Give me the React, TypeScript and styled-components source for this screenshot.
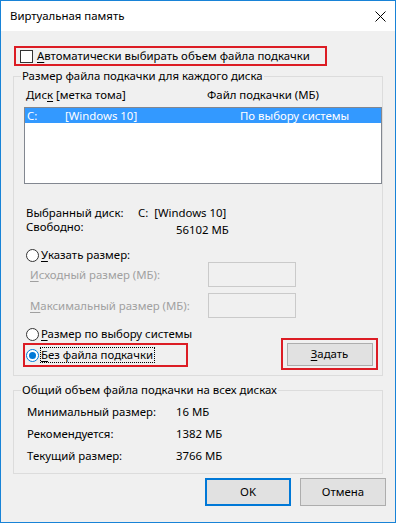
import React from "react";
import styled, { createGlobalStyle } from "styled-components";

const GlobalStyle = createGlobalStyle`
  html, body {
    margin: 0;
    padding: 0;
    background: #ffffff;
  }
`;

const ANNOTATION = "#dc1c24";

const Window = styled.div`
  box-sizing: border-box;
  width: 396px;
  height: 523px;
  border: 1px solid #1883d7;
  background: #f0f0f0;
  display: flex;
  flex-direction: column;
  font-family: "Noto Sans", "Segoe UI", sans-serif;
  font-size: 11.4px;
  line-height: 14px;
  color: #000;
`;

const TitleBar = styled.div`
  height: 30px;
  flex: none;
  background: #ffffff;
  display: flex;
  align-items: center;
  justify-content: space-between;
  padding-left: 9px;
`;

const CloseBox = styled.div`
  width: 30px;
  height: 30px;
  display: flex;
  align-items: center;
  justify-content: center;
`;

const Body = styled.div`
  display: flex;
  flex-direction: column;
  padding: 0 9px 0 12px;
`;

const Mnemonic = styled.span`
  text-decoration: underline;
  text-underline-offset: 2px;
`;

const AutoRow = styled.div`
  box-sizing: border-box;
  margin: 15px 0 0 1px;
  width: 313px;
  height: 20px;
  border: 2px solid ${ANNOTATION};
  display: flex;
  align-items: center;
  gap: 4px;
  padding-left: 4px;
`;

const CheckBox = styled.span`
  box-sizing: border-box;
  width: 13px;
  height: 13px;
  border: 1px solid #333;
  background: #fff;
  flex: none;
`;

const Group = styled.fieldset<{ $top: number; $bottom: number }>`
  box-sizing: border-box;
  width: 370px;
  min-width: 0;
  margin: ${(p) => p.$top}px 0 0 0;
  padding: 0 0 ${(p) => p.$bottom}px 0;
  border: 1px solid #dcdcdc;
  display: flex;
  flex-direction: column;
`;

const Legend = styled.legend`
  padding: 0 1px;
  margin-left: 7px;
  line-height: 14px;
`;

const ColumnHeader = styled.div`
  display: grid;
  grid-template-columns: 181px 1fr;
  margin-top: 5px;
  padding-left: 12px;
`;

const ListBox = styled.div`
  box-sizing: border-box;
  margin: 5px 0 0 10px;
  width: 358px;
  height: 77px;
  border: 1px solid #828790;
  background: #fff;
`;

const ListRow = styled.div<{ $selected?: boolean }>`
  display: grid;
  grid-template-columns: 38px 175px 1fr;
  height: 15px;
  line-height: 15px;
  padding-left: 2px;
  background: ${(p) => (p.$selected ? "#3399ff" : "transparent")};
  color: ${(p) => (p.$selected ? "#fff" : "#000")};
`;

const InfoGrid = styled.div`
  display: grid;
  grid-template-columns: 112px 1fr;
  margin-top: 22px;
  padding-left: 12px;
`;

const Value = styled.span<{ $shift?: number }>`
  padding-left: ${(p) => p.$shift ?? 0}px;
  padding-top: ${(p) => (p.$shift ? 3 : 0)}px;
`;

const RadioRow = styled.label<{ $top?: number; $pad?: number }>`
  display: flex;
  align-items: center;
  gap: 2px;
  height: 14px;
  margin-top: ${(p) => p.$top ?? 0}px;
  padding-left: ${(p) => p.$pad ?? 12}px;
`;

const Radio = styled.span<{ $checked?: boolean }>`
  box-sizing: border-box;
  width: 13px;
  height: 13px;
  border-radius: 50%;
  border: 1px solid ${(p) => (p.$checked ? "#0078d7" : "#333")};
  background: #fff;
  flex: none;
  display: flex;
  align-items: center;
  justify-content: center;
  &::after {
    content: "";
    width: 7px;
    height: 7px;
    border-radius: 50%;
    background: ${(p) => (p.$checked ? "#0078d7" : "transparent")};
  }
`;

const SizeRows = styled.div`
  display: flex;
  flex-direction: column;
  gap: 6px;
`;

const SizeRow = styled.div`
  display: grid;
  grid-template-columns: 178px 88px;
  align-items: center;
  height: 25px;
  padding-left: 16px;
  color: #a0a0a0;
`;

const DisabledInput = styled.span`
  box-sizing: border-box;
  height: 25px;
  border: 1px solid #cacaca;
  background: #f0f0f0;
`;

const BottomRow = styled.div`
  display: flex;
  justify-content: space-between;
  align-items: flex-start;
  margin-top: 9px;
`;

const LeftColumn = styled.div`
  display: flex;
  flex-direction: column;
`;

const NoFileBox = styled.div`
  box-sizing: border-box;
  margin: 2px 0 0 9px;
  width: 165px;
  height: 24px;
  border: 2px solid ${ANNOTATION};
  display: flex;
  align-items: center;
  gap: 1px;
  padding-left: 1px;
`;

const FocusLabel = styled.span`
  border: 1px dotted #000;
  line-height: 14px;
  padding-right: 1px;
`;

const SetBox = styled.div`
  box-sizing: border-box;
  margin: 11px 4px 0 0;
  width: 97px;
  height: 32px;
  border: 2px solid ${ANNOTATION};
  display: flex;
  align-items: center;
  justify-content: center;
`;

const Button = styled.button<{ $w: number; $h: number; $default?: boolean }>`
  box-sizing: border-box;
  width: ${(p) => p.$w}px;
  height: ${(p) => p.$h}px;
  margin: 0;
  padding: 0;
  font: inherit;
  color: #000;
  background: #e1e1e1;
  border: ${(p) => (p.$default ? "2px solid #0078d7" : "1px solid #adadad")};
`;

const Totals = styled.div`
  display: grid;
  grid-template-columns: 149px 1fr;
  row-gap: 8px;
  padding: 8px 0 0 13px;
`;

const Footer = styled.div`
  display: flex;
  justify-content: flex-end;
  gap: 9px;
  margin-top: 4px;
`;

export default function App() {
  return (
    <>
      <GlobalStyle />
      <Window>
        <TitleBar>
          <span>Виртуальная память</span>
          <CloseBox>
            <svg width="11" height="11" viewBox="0 0 11 11">
              <path d="M0.5 0.5 L10.5 10.5 M10.5 0.5 L0.5 10.5" stroke="#000" strokeWidth="1" />
            </svg>
          </CloseBox>
        </TitleBar>
        <Body>
          <AutoRow>
            <CheckBox />
            <span>
              <Mnemonic>А</Mnemonic>втоматически выбирать объем файла подкачки
            </span>
          </AutoRow>

          <Group $top={3} $bottom={5}>
            <Legend>Размер файла подкачки для каждого диска</Legend>
            <ColumnHeader>
              <span>
                Дис<Mnemonic>к</Mnemonic> [метка тома]
              </span>
              <span>Файл подкачки (МБ)</span>
            </ColumnHeader>
            <ListBox>
              <ListRow $selected>
                <span>C:</span>
                <span>[Windows 10]</span>
                <span>По выбору системы</span>
              </ListRow>
            </ListBox>
            <InfoGrid>
              <span>Выбранный диск:</span>
              <span>C:&nbsp;&nbsp;[Windows 10]</span>
              <span>Свободно:</span>
              <Value $shift={38}>56102 МБ</Value>
            </InfoGrid>
            <RadioRow $top={11}>
              <Radio />
              <span>
                <Mnemonic>У</Mnemonic>казать размер:
              </span>
            </RadioRow>
            <SizeRows>
              <SizeRow>
                <span>
                  <Mnemonic>И</Mnemonic>сходный размер (МБ):
                </span>
                <DisabledInput />
              </SizeRow>
              <SizeRow>
                <span>
                  <Mnemonic>М</Mnemonic>аксимальный размер (МБ):
                </span>
                <DisabledInput />
              </SizeRow>
            </SizeRows>
            <BottomRow>
              <LeftColumn>
                <RadioRow>
                  <Radio />
                  <span>
                    <Mnemonic>Р</Mnemonic>азмер по выбору системы
                  </span>
                </RadioRow>
                <NoFileBox>
                  <Radio $checked />
                  <FocusLabel>
                    <Mnemonic>Б</Mnemonic>ез файла подкачки
                  </FocusLabel>
                </NoFileBox>
              </LeftColumn>
              <SetBox>
                <Button $w={86} $h={23}>
                  <Mnemonic>З</Mnemonic>адать
                </Button>
              </SetBox>
            </BottomRow>
          </Group>

          <Group $top={7} $bottom={10}>
            <Legend>Общий объем файла подкачки на всех дисках</Legend>
            <Totals>
              <span>Минимальный размер:</span>
              <span>16 МБ</span>
              <span>Рекомендуется:</span>
              <span>1382 МБ</span>
              <span>Текущий размер:</span>
              <span>3766 МБ</span>
            </Totals>
          </Group>

          <Footer>
            <Button $w={86} $h={28} $default>
              OK
            </Button>
            <Button $w={86} $h={28}>
              Отмена
            </Button>
          </Footer>
        </Body>
      </Window>
    </>
  );
}
